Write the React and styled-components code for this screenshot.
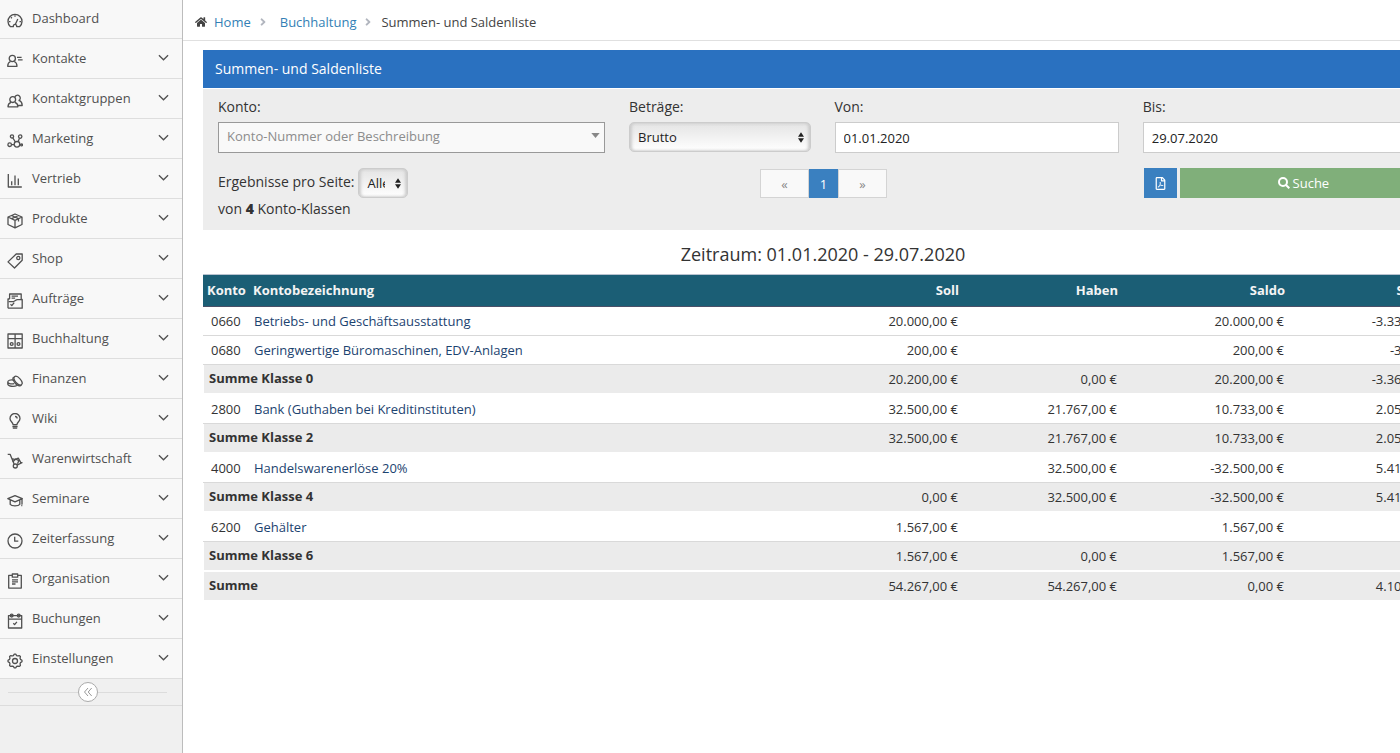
import React from "react";
import styled, { createGlobalStyle } from "styled-components";
import { FaAngleRight, FaHome, FaRegFilePdf } from "react-icons/fa";

const gearPoints = Array.from({ length: 32 }, (_, i) => {
  const radius = i % 4 < 2 ? 7 : 5.7;
  const angle = ((i - 0.5) * Math.PI) / 16;
  return `${(8 + radius * Math.sin(angle)).toFixed(2)},${(8 - radius * Math.cos(angle)).toFixed(2)}`;
}).join(" ");

const icons = {
  dashboard: (
    <>
      <path d="M3.3 13.6a7 7 0 1 1 9.4 0H9.6a1.7 1.7 0 1 0-3.2 0z" />
      <path d="M8.4 11.2 10.8 6M8 2.2v1.6M3.9 4.3l1 1M2 8.6h1.5M12.5 8.6H14" />
    </>
  ),
  contact: (
    <>
      <circle cx="5.3" cy="5.5" r="3.1" />
      <path d="M3.5 8.5C1.6 9.3.7 11 .7 13.3H10c0-2.3-.9-4-2.8-4.8M10 4.4h4.6M11 6.8h4.6" />
    </>
  ),
  groups: (
    <>
      <circle cx="5.7" cy="6.6" r="2.9" />
      <path d="M7.8 4.2a2.8 2.8 0 1 1 3.7 3.4M4 9.4c-2 .7-3 2.3-3 4.4h9.9c0-2.1-1-3.7-3-4.4M12.3 7.3c1.9.9 2.9 2.5 2.9 5.2h-4" />
    </>
  ),
  marketing: (
    <>
      <circle cx="5" cy="3.4" r="1.6" />
      <circle cx="13.2" cy="3.6" r="1.7" />
      <circle cx="2.7" cy="11.7" r="1.8" />
      <circle cx="10" cy="11.3" r="2.8" />
      <circle cx="14.6" cy="11.9" r="0.9" />
      <path d="M5.8 4.9 8.4 9M12.5 5.3 11.1 8.6M4.6 11.6h2.5M12.8 11.6h.9" />
    </>
  ),
  sales: <path d="M1.3 1v13h13.5M4.7 8.2v4M8 2.6v9.6M11.3 5.5v6.7" />,
  product: (
    <path d="M8 1l7 3v7.5l-7 3.3-7-3.3V4zM1 4l7 3.3L15 4M8 7.3v7.5M4.5 2.5l7 3.2v2.8M11.5 2.5 4.6 5.6" />
  ),
  tag: (
    <>
      <path d="M9.2 1h6v6.3L7.5 15 1 8.9z" />
      <circle cx="11.3" cy="5" r="1.6" />
    </>
  ),
  orders: (
    <>
      <path d="M2.6 6V1h11.6v5.5M1 15.2V6h1.6M14.2 6.5h1v8.7H1M4.6 3.2H11M4.6 5.2h3.5" />
      <path d="M1.6 8.6h4.6c2 0 2.3-2 4.3-2h4.3M3.5 11.3l1.3 1.3 2.4-3" />
    </>
  ),
  ledger: (
    <>
      <path d="M1 1h14.2v14H1zM1 5.6h14.2M8.1 1v14" />
      <circle cx="4.7" cy="11" r="1.4" />
      <circle cx="11.5" cy="11" r="1.4" />
    </>
  ),
  finance: (
    <>
      <ellipse cx="11" cy="7.7" rx="5.3" ry="2.7" transform="rotate(48 11 7.7)" />
      <path d="M7.4 4.4C6 4.3 5.500 5 6.200 6.700c.9 2.400 3.400 5.400 6 6.100 1 .2 1.800-.3 2.200-.9" />
      <path d="M6 7C3.200 6.600.8 7.400.8 9s2.700 2.300 6.500 1.700M.8 9v2c0 2.300 6 3.200 9.200 1.500" />
    </>
  ),
  bulb: (
    <path d="M6 11.600c0-2.300-3-3-3-6.100a5 5 0 0 1 10 0c0 3.100-3 3.800-3 6.100zM5.400 13.500h5.200M5.800 15.200h4.400M8 3.500c1.300 0 2.100.8 2.100 2" />
  ),
  truck: (
    <>
      <path d="M.7 1.300h2.400l4 9.800M10 12.200l5.500-2.700M5 5.500l3 1.200 3.300-1.600 2.800 5" />
      <path d="M5.800 9l2.600-3 3.500 1.600-1.400 3.200" />
      <circle cx="8.300" cy="13" r="2" />
    </>
  ),
  seminar: (
    <path d="M.8 5.700 8 2.600l7.300 3.100L8 8.900zM3.200 7v4.300c1.500 2 8.100 2 9.600 0V7M15 6v5.500M14.300 12.500h1" />
  ),
  clock: (
    <>
      <circle cx="8" cy="8" r="7" />
      <path d="M7.700 3.700v4.500h3.600" />
    </>
  ),
  clipboard: (
    <path d="M5.300 2.300H1.700v12.800h12.600V2.300h-3.600M5.300 1h5.400v3.200H5.300zM5 6.800h6M5 8.900h6M5 11h3.500" />
  ),
  booking: (
    <>
      <path d="M1.500 2.600h13.200V15H1.500zM1.500 6.200h13.200M6.300 10.200l1.300 1.400 2.300-2.800" />
      <circle cx="4.700" cy="2.600" r="1.400" />
      <circle cx="11.700" cy="2.600" r="1.400" />
    </>
  ),
  settings: (
    <>
      <polygon points={gearPoints} />
      <circle cx="8" cy="8" r="2.500" />
    </>
  ),
};

const menu = [
  { label: "Dashboard", icon: "dashboard", single: true },
  { label: "Kontakte", icon: "contact" },
  { label: "Kontaktgruppen", icon: "groups" },
  { label: "Marketing", icon: "marketing" },
  { label: "Vertrieb", icon: "sales" },
  { label: "Produkte", icon: "product" },
  { label: "Shop", icon: "tag" },
  { label: "Aufträge", icon: "orders" },
  { label: "Buchhaltung", icon: "ledger" },
  { label: "Finanzen", icon: "finance" },
  { label: "Wiki", icon: "bulb" },
  { label: "Warenwirtschaft", icon: "truck" },
  { label: "Seminare", icon: "seminar" },
  { label: "Zeiterfassung", icon: "clock" },
  { label: "Organisation", icon: "clipboard" },
  { label: "Buchungen", icon: "booking" },
  { label: "Einstellungen", icon: "settings" },
];

const rows = [
  { konto: "0660", name: "Betriebs- und Geschäftsausstattung", values: ["20.000,00 €", "", "20.000,00 €", "-3.333,33 €"] },
  { konto: "0680", name: "Geringwertige Büromaschinen, EDV-Anlagen", values: ["200,00 €", "", "200,00 €", "-33,33 €"] },
  { sum: "Summe Klasse 0", values: ["20.200,00 €", "0,00 €", "20.200,00 €", "-3.366,66 €"] },
  { konto: "2800", name: "Bank (Guthaben bei Kreditinstituten)", values: ["32.500,00 €", "21.767,00 €", "10.733,00 €", "2.055,00 €"] },
  { sum: "Summe Klasse 2", values: ["32.500,00 €", "21.767,00 €", "10.733,00 €", "2.055,00 €"] },
  { konto: "4000", name: "Handelswarenerlöse 20%", values: ["", "32.500,00 €", "-32.500,00 €", "5.416,67 €"] },
  { sum: "Summe Klasse 4", values: ["0,00 €", "32.500,00 €", "-32.500,00 €", "5.416,67 €"] },
  { konto: "6200", name: "Gehälter", values: ["1.567,00 €", "", "1.567,00 €", ""] },
  { sum: "Summe Klasse 6", values: ["1.567,00 €", "0,00 €", "1.567,00 €", ""] },
  { sum: "Summe", values: ["54.267,00 €", "54.267,00 €", "0,00 €", "4.105,01 €"] },
];

const SelectBox = ({ id, options, narrow }) => (
  <SelectWrap $narrow={narrow}>
    <Select id={id}>
      {options.map((option) => (
        <option key={option}>{option}</option>
      ))}
    </Select>
    <SelectArrows viewBox="0 0 7 12" aria-hidden="true">
      <path d="M3.5 0 7 5H0zM3.5 12 0 7h7z" />
    </SelectArrows>
  </SelectWrap>
);

const Sidebar = () => (
  <Side>
    <Menu>
      {menu.map((item) => (
        <MenuItem key={item.label}>
          <MenuLink href="#">
            <MenuIcon viewBox="0 0 16 16" aria-hidden="true">
              {icons[item.icon]}
            </MenuIcon>
            <MenuLabel>{item.label}</MenuLabel>
            {!item.single && (
              <Chevron viewBox="0 0 12 7" aria-hidden="true">
                <path d="M1 1l5 5 5-5" />
              </Chevron>
            )}
          </MenuLink>
        </MenuItem>
      ))}
    </Menu>
    <CollapseBar>
      <CollapseButton type="button" aria-label="Menü einklappen">
        <svg width="10" height="10" viewBox="0 0 10 10" aria-hidden="true">
          <path d="M5 1 1.5 5 5 9M8.7 1 5.2 5l3.5 4" />
        </svg>
      </CollapseButton>
    </CollapseBar>
  </Side>
);

const SearchForm = () => (
  <Form onSubmit={(e) => e.preventDefault()}>
    <Field $span={4}>
      <label htmlFor="konto">Konto:</label>
      <Combo>
        <ComboInput id="konto" type="text" placeholder="Konto-Nummer oder Beschreibung" />
        <ComboCaret viewBox="0 0 10 6" aria-hidden="true">
          <path d="M0 0h10L5 6z" />
        </ComboCaret>
      </Combo>
    </Field>
    <Field $span={2}>
      <label htmlFor="betraege">Beträge:</label>
      <SelectBox id="betraege" options={["Brutto", "Netto"]} />
    </Field>
    <Field $span={3}>
      <label htmlFor="von">Von:</label>
      <DateInput id="von" type="text" defaultValue="01.01.2020" />
    </Field>
    <Field $span={3}>
      <label htmlFor="bis">Bis:</label>
      <DateInput id="bis" type="text" defaultValue="29.07.2020" />
    </Field>
    <PageSize>
      <PageSizeRow>
        <label htmlFor="proSeite">Ergebnisse pro Seite:</label>
        <SelectBox id="proSeite" options={["Alle", "10", "25"]} narrow />
      </PageSizeRow>
      <div>
        von <b>4</b> Konto-Klassen
      </div>
    </PageSize>
    <Pagination aria-label="Seiten">
      <PageButton type="button">«</PageButton>
      <PageButton type="button" $active>
        1
      </PageButton>
      <PageButton type="button">»</PageButton>
    </Pagination>
    <Actions>
      <PdfButton type="button" aria-label="PDF">
        <FaRegFilePdf />
      </PdfButton>
      <SearchButton type="submit">
        <svg width="12" height="12" viewBox="0 0 12 12" aria-hidden="true">
          <circle cx="5" cy="5" r="4" />
          <path d="M8 8l3.3 3.3" />
        </svg>
        Suche
      </SearchButton>
    </Actions>
  </Form>
);

const AccountTable = () => (
  <Table>
    <colgroup>
      <Col $width={46} />
      <col />
      <Col $width={160} />
      <Col $width={159} />
      <Col $width={167} />
      <Col $width={154} />
    </colgroup>
    <thead>
      <tr>
        <HeadCell>Konto</HeadCell>
        <HeadCell>Kontobezeichnung</HeadCell>
        <HeadCell $right>Soll</HeadCell>
        <HeadCell $right>Haben</HeadCell>
        <HeadCell $right>Saldo</HeadCell>
        <HeadCell $right>Steuer</HeadCell>
      </tr>
    </thead>
    <tbody>
      {rows.map((row) =>
        row.sum ? (
          <SumRow key={row.sum}>
            <SumLabel colSpan={2}>{row.sum}</SumLabel>
            {row.values.map((value, i) => (
              <Amount key={i}>{value}</Amount>
            ))}
          </SumRow>
        ) : (
          <Row key={row.konto}>
            <Number>{row.konto}</Number>
            <Name>
              <a href="#">{row.name}</a>
            </Name>
            {row.values.map((value, i) => (
              <Amount key={i}>{value}</Amount>
            ))}
          </Row>
        )
      )}
    </tbody>
  </Table>
);

const App = () => (
  <>
    <GlobalStyle />
    <Layout>
      <Sidebar />
      <Main>
        <Breadcrumb aria-label="Breadcrumb">
          <FaHome />
          <a href="#">Home</a>
          <Separator />
          <a href="#">Buchhaltung</a>
          <Separator $tight />
          <span>Summen- und Saldenliste</span>
        </Breadcrumb>
        <Content>
          <PanelTitle>Summen- und Saldenliste</PanelTitle>
          <SearchForm />
          <Period>Zeitraum: 01.01.2020 - 29.07.2020</Period>
          <AccountTable />
        </Content>
      </Main>
    </Layout>
  </>
);

export default App;

// Styled components
const GlobalStyle = createGlobalStyle`
  * {
    box-sizing: border-box;
  }

  body {
    margin: 0;
    background: #fff;
    color: #333;
    font-family: "Open Sans", sans-serif;
    font-size: 13px;
  }

  a {
    text-decoration: none;
  }

  button, input, select {
    font-family: inherit;
    font-size: 13px;
    margin: 0;
  }
`;

const Layout = styled.div`
  display: flex;
  min-height: 100vh;
`;

const Side = styled.nav`
  flex: 0 0 183px;
  background: #f0f0f0;
  border-right: 1px solid #bcbcbc;
`;

const Menu = styled.ul`
  list-style: none;
  margin: -1px 0 0;
  padding: 0;
`;

const MenuItem = styled.li`
  border-bottom: 1px solid #dedede;
  background: #f8f8f8;
`;

const MenuLink = styled.a`
  display: flex;
  align-items: center;
  height: 39px;
  padding: 0 13px 2px 7px;
  color: #505050;
`;

const MenuIcon = styled.svg`
  width: 16px;
  height: 16px;
  margin: 6px 9px 0 0;
  fill: none;
  stroke: #505050;
  stroke-width: 1.3;
  stroke-linejoin: round;
`;

const MenuLabel = styled.span`
  flex: 1;
`;

const Chevron = styled.svg`
  width: 11px;
  height: 7px;
  fill: none;
  stroke: #505050;
  stroke-width: 1.4;
`;

const CollapseBar = styled.div`
  display: flex;
  align-items: center;
  height: 27px;
  padding: 0 15px 0 8px;
  border-bottom: 1px solid #dcdcdc;

  &::before,
  &::after {
    content: "";
    flex: 1;
    height: 1px;
    background: #dcdcdc;
  }
`;

const CollapseButton = styled.button`
  display: flex;
  align-items: center;
  justify-content: center;
  width: 20px;
  height: 20px;
  padding: 0;
  border: 1px solid #aaa;
  border-radius: 50%;
  background: #fff;

  svg {
    fill: none;
    stroke: #999;
  }
`;

const Main = styled.main`
  flex: 1;
  min-width: 0;
  overflow: hidden;
`;

const Breadcrumb = styled.nav`
  display: flex;
  align-items: center;
  height: 41px;
  padding: 3px 12px 0;
  border-bottom: 1px solid #e0e0e0;
  color: #444;

  > svg:first-child {
    width: 12px;
    height: 12px;
    margin-right: 7px;
  }

  a {
    color: #337fb5;
  }
`;

const Separator = styled(FaAngleRight)`
  width: 8px;
  height: 12px;
  margin: 1px ${(props) => (props.$tight ? "9px" : "13px")} 0 8px;
  color: #b2b6bf;
`;

// the content is wider than the visible area and is cut off on the right
const Content = styled.div`
  margin: 9px -43px 0 20px;
`;

const PanelTitle = styled.h1`
  margin: 0 0 1px;
  padding: 0 12px;
  background: #2a71c0;
  color: #fff;
  font-size: 14px;
  font-weight: 500;
  line-height: 38px;
`;

const Form = styled.form`
  display: grid;
  grid-template-columns: repeat(12, minmax(0, 1fr));
  gap: 15px 24px;
  padding: 8px 16px 11px 15px;
  background: #ededed;
  font-size: 14px;
  line-height: 20px;
`;

const Field = styled.div`
  grid-column: span ${(props) => props.$span};
  display: flex;
  flex-direction: column;
  gap: 5px;
`;

const Combo = styled.div`
  display: grid;
  align-items: center;

  > * {
    grid-area: 1 / 1;
  }
`;

const ComboInput = styled.input`
  width: 100%;
  height: 31px;
  padding: 0 24px 3px 8px;
  border: 1px solid #999;
  background: #f9f9f9;

  &::placeholder {
    color: #8c8c8c;
  }
`;

const ComboCaret = styled.svg`
  justify-self: end;
  width: 9px;
  height: 5px;
  margin: 0 5px 4px 0;
  fill: #888;
`;

const SelectWrap = styled.div`
  display: grid;
  align-items: center;
  align-self: flex-start;
  width: ${(props) => (props.$narrow ? "50px" : "100%")};

  > * {
    grid-area: 1 / 1;
  }
`;

const Select = styled.select`
  appearance: none;
  width: 100%;
  height: 30px;
  padding: 0 22px 0 8px;
  border: 1px solid #ccc;
  border-radius: 5px;
  background: linear-gradient(#e4e4e4, #fff);
  box-shadow: inset 2px 0 3px #ccc, inset -2px 0 3px #ccc;
  color: #222;
`;

const SelectArrows = styled.svg`
  justify-self: end;
  width: 6px;
  height: 11px;
  margin-right: 7px;
  fill: #222;
  pointer-events: none;
`;

const DateInput = styled.input`
  width: 100%;
  height: 31px;
  padding: 0 8px;
  border: 1px solid #ccc;
  background: #fff;
  color: #222;
`;

const PageSize = styled.div`
  grid-column: span 4;

  b {
    font-weight: 800;
  }
`;

const PageSizeRow = styled.div`
  display: flex;
  gap: 4px;
  margin-bottom: 1px;
  line-height: 28px;
`;

const Pagination = styled.nav`
  grid-column: span 4;
  display: flex;
  justify-content: center;
  align-items: flex-start;
  padding: 1px 0 0 2px;
`;

const PageButton = styled.button`
  width: ${(props) => (props.$active ? "29px" : "49px")};
  height: 29px;
  padding: 0;
  border: 1px solid ${(props) => (props.$active ? "#3a80c0" : "#d4d4d4")};
  background: ${(props) => (props.$active ? "#3a80c0" : "#f9f9f9")};
  color: ${(props) => (props.$active ? "#fff" : "#888")};
`;

const Actions = styled.div`
  grid-column: 10 / span 3;
  display: flex;
  gap: 3px;
  align-items: flex-start;
  padding-left: 1px;
`;

const ActionButton = styled.button`
  display: flex;
  align-items: center;
  justify-content: center;
  gap: 3px;
  height: 30px;
  padding: 0;
  border: 0;
  color: #fff;
`;

const PdfButton = styled(ActionButton)`
  width: 33px;
  background: #3a80c0;
`;

const SearchButton = styled(ActionButton)`
  flex: 1;
  background: #80af7a;
  font-weight: 500;

  svg {
    fill: none;
    stroke: #fff;
    stroke-width: 2;
  }
`;

const Period = styled.h2`
  margin: 0;
  padding: 12px 0 8px;
  font-size: 18px;
  font-weight: 400;
  line-height: 24px;
  text-align: center;
`;

const Table = styled.table`
  width: 100%;
  table-layout: fixed;
  border-collapse: separate;
  border-spacing: 0;
`;

const Col = styled.col`
  width: ${(props) => props.$width}px;
`;

const HeadCell = styled.th`
  height: 33px;
  padding: 0 4px 2px;
  border-top: 1px solid #b9c3d0;
  border-bottom: 1px solid #4a5068;
  background: #1b5e75;
  color: #f4f4f4;
  font-weight: 700;
  text-align: ${(props) => (props.$right ? "right" : "left")};
`;

const Row = styled.tr`
  td {
    height: 29px;
    border-bottom: 1px solid #d9d9d9;
  }
`;

const SumRow = styled.tr`
  background: #ebebeb;

  th,
  td {
    height: 30px;
    border-bottom: 2px solid #fff;
  }
`;

const Number = styled.td`
  padding: 0 8px;
`;

const Name = styled.td`
  padding: 0 5px;

  a {
    color: #1c4370;
  }
`;

const Amount = styled.td`
  padding: 0 5px;
  text-align: right;
`;

const SumLabel = styled.th`
  padding: 0 5px 2px;
  border-left: 1px solid #fff;
  font-weight: 700;
  text-align: left;
`;
